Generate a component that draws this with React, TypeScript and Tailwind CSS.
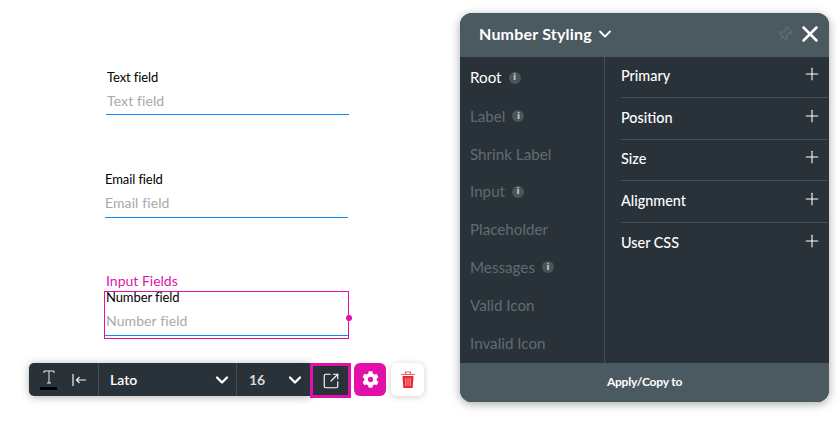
import { FunctionComponent } from 'react';
import { ChevronDown, Plus, SquareArrowOutUpRight, X, Pin } from 'lucide-react';
import { FaCog } from 'react-icons/fa';

const InfoDot: FunctionComponent = () => (
    <span className="ml-[7px] w-[12px] h-[12px] rounded-full bg-[#4a555b] flex items-center justify-center">
        <span className="text-[9px] leading-none font-bold text-[#c4c9cc] font-['DejaVu_Sans']">i</span>
    </span>
);

const leftItems = [
    { name: 'Root', active: true, info: true, h: 'h-[40px] pt-[1px]' },
    { name: 'Label', info: true, h: 'h-[38px]' },
    { name: 'Shrink Label', h: 'h-[38px]' },
    { name: 'Input', info: true, h: 'h-[37px]' },
    { name: 'Placeholder', h: 'h-[38px]' },
    { name: 'Messages', info: true, h: 'h-[38px]' },
    { name: 'Valid Icon', h: 'h-[38px]' },
    { name: 'Invalid Icon', h: 'h-[38px]' },
];

const rightItems = [
    { name: 'Primary', h: 'h-[41px] border-b' },
    { name: 'Position', h: 'h-[42px] border-b' },
    { name: 'Size', h: 'h-[41px] border-b' },
    { name: 'Alignment', h: 'h-[42px] border-b' },
    { name: 'User CSS', h: 'h-[41px]' },
];

const Field: FunctionComponent<{ label: string; className: string; labelMl: string; lineGap: string }> = ({ label, className, labelMl, lineGap }) => (
    <div className={className}>
        <div className={`text-[13px] leading-[16px] tracking-[-0.1px] text-black ${labelMl}`}>{label}</div>
        <div className={`mt-[7px] text-[14px] leading-[18px] tracking-[0.1px] text-[#a9a9a9] ${labelMl}`}>{label}</div>
        <div className={`${lineGap} h-[1px] bg-[#0d8bf2]`}></div>
    </div>
);

export default function App() {
    return (
        <div className="w-[840px] h-[438px] bg-white flex font-['Lato',sans-serif] overflow-hidden">
            <div className="w-[460px] flex-shrink-0 pt-[69px]">
                <Field label="Text field" className="ml-[106px] w-[243px]" labelMl="ml-[1px]" lineGap="mt-[4px]" />
                <Field label="Email field" className="ml-[105px] w-[243px] mt-[56px]" labelMl="" lineGap="mt-[5px]" />
                <div className="ml-[106px] mt-[54px] mb-[2px] text-[14px] leading-[17px] text-[#e014a8]">Input Fields</div>
                <div className="relative ml-[104px] w-[245px] h-[48px] border border-[#e20fa9]">
                    <div className="ml-[1px] -mt-[2px] text-[13px] leading-[14px] tracking-[-0.1px] text-black">Number field</div>
                    <div className="ml-[1px] mt-[8px] text-[14px] leading-[18px] tracking-[0.1px] text-[#a9a9a9]">Number field</div>
                    <div className="mt-[5px] h-[1px] bg-[#0d8bf2]"></div>
                    <div className="absolute -right-[4px] top-[23px] w-[6px] h-[6px] rounded-full bg-[#e20fa9]"></div>
                </div>
                <div className="ml-[29px] mt-[24px] flex items-start">
                    <div className="w-[282px] h-[33px] rounded-l-[5px] bg-[#293239] flex text-white shadow-[0_1px_8px_rgba(0,0,0,0.3)]">
                        <div className="w-[70px] flex items-center border-r border-[#454e54]">
                            <div className="ml-[11px] w-[17px] flex flex-col items-center">
                                <svg width="12" height="14" viewBox="0 0 12 14" fill="none" stroke="#e8eaeb" strokeWidth="1">
                                    <path d="M1 3V1h10v2M6 1v12M4 13h4" />
                                </svg>
                                <span className="mt-[3px] w-[17px] h-[3px] bg-black"></span>
                            </div>
                            <svg className="ml-[15px]" width="14" height="12" viewBox="0 0 14 12" fill="none" stroke="#f0f1f2" strokeWidth="1.2">
                                <path d="M1 0v12M14 6H4.500M7.500 3 4.500 6l3 3" />
                            </svg>
                        </div>
                        <div className="w-[138px] flex items-center border-r border-[#454e54] pl-[11px] pr-[4px] justify-between">
                            <span className="text-[14px] font-semibold">Lato</span>
                            <ChevronDown size={20} strokeWidth={2.8} />
                        </div>
                        <div className="w-[74px] flex items-center pl-[12px] pr-[6px] justify-between">
                            <span className="text-[14px] font-bold text-[#d8dbdd]">16</span>
                            <ChevronDown size={20} strokeWidth={2.8} />
                        </div>
                    </div>
                    <div className="w-[41px] h-[35px] -ml-[1px] bg-[#293239] border-[3px] border-[#e20fa9] flex items-center justify-center text-white">
                        <SquareArrowOutUpRight size={18} strokeWidth={1.5} />
                    </div>
                    <div className="ml-[3px] w-[32px] h-[33px] rounded-[6px] bg-[#e20fa9] flex items-center justify-center text-white">
                        <FaCog size={17} />
                    </div>
                    <div className="ml-[5px] w-[33px] h-[33px] rounded-[6px] bg-white flex items-center justify-center shadow-[0_1px_6px_rgba(0,0,0,0.2)]">
                        <svg width="14" height="17" viewBox="0 0 14 17">
                            <path d="M0 3.500h14M4.500 3V1h5v2" fill="none" stroke="#ee6065" strokeWidth="1.200" />
                            <path d="M1.500 5h11l-.8 12H2.300z" fill="#e8262c" />
                            <path d="M4.700 7v8M7 7v8M9.300 7v8" stroke="#f7a5a7" strokeWidth="1" />
                        </svg>
                    </div>
                </div>
            </div>
            <div className="mt-[13px] w-[369px] h-[389px] rounded-[12px] bg-[#293239] shadow-[0_2px_10px_rgba(0,0,0,0.35)] flex flex-col overflow-hidden flex-shrink-0">
                <div className="h-[44px] bg-[#4b5a60] flex items-center pl-[19px] pr-[6px] pb-[2px] text-white">
                    <span className="text-[16px] font-bold tracking-[0.2px]">Number Styling</span>
                    <ChevronDown className="ml-[3px]" size={20} strokeWidth={2.2} />
                    <Pin className="ml-auto text-[#626c71] rotate-45" size={16} strokeWidth={2} />
                    <X className="ml-[4px]" size={26} strokeWidth={2.3} />
                </div>
                <div className="flex-1 flex">
                    <div className="w-[145px] border-r border-[#454e54] flex flex-col">
                        {leftItems.map((item) => (
                            <div key={item.name} className={`${item.h} pl-[10px] flex items-center text-[15.2px] ${item.active ? 'text-white' : 'text-[#616c72]'}`}>
                                {item.name}
                                {item.info ? <InfoDot /> : null}
                            </div>
                        ))}
                    </div>
                    <div className="flex-1 pl-[16px] pr-[1px]">
                        {rightItems.map((item) => (
                            <div key={item.name} className={`${item.h} pb-[2px] border-[#454e54] flex items-center justify-between text-[14.4px] font-medium text-white`}>
                                {item.name}
                                <Plus className="mr-[6px] -mt-[4px]" size={20} strokeWidth={1.3} />
                            </div>
                        ))}
                    </div>
                </div>
                <div className="h-[39px] pb-[2px] bg-[#4b5a60] flex items-center justify-center text-[12px] font-bold tracking-[-0.2px] text-white">
                    Apply/Copy to
                </div>
            </div>
        </div>
    );
}
